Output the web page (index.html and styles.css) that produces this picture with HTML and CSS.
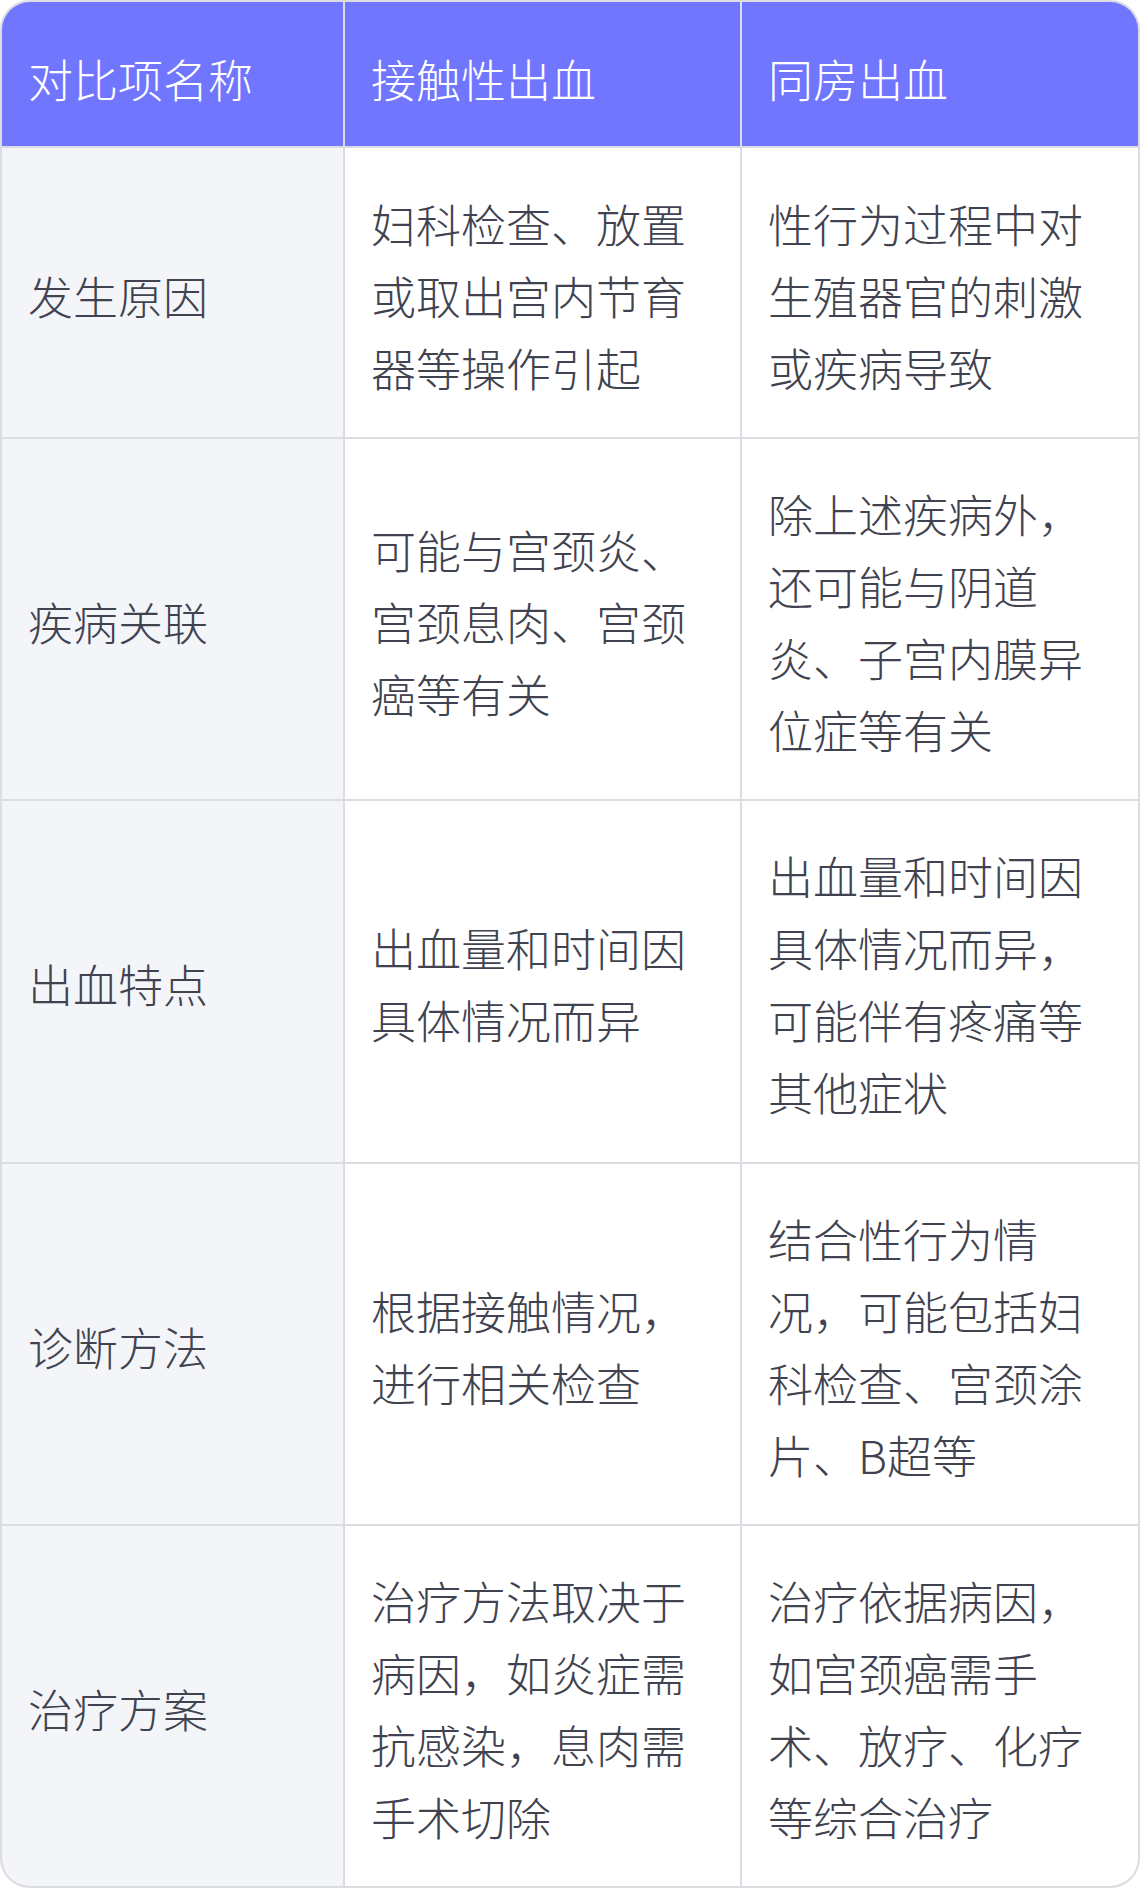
FILE: index.html
```html
<!DOCTYPE html>
<html lang="zh-CN">
<head>
<meta charset="utf-8">
<title>对比表</title>
<link rel="stylesheet" href="styles.css">
</head>
<body>
<div class="table">
  <div class="cell head">对比项名称</div>
  <div class="cell head">接触性出血</div>
  <div class="cell head">同房出血</div>

  <div class="cell label">发生原因</div>
  <div class="cell">妇科检查、放置或取出宫内节育器等操作引起</div>
  <div class="cell">性行为过程中对生殖器官的刺激或疾病导致</div>

  <div class="cell label">疾病关联</div>
  <div class="cell">可能与宫颈炎、宫颈息肉、宫颈癌等有关</div>
  <div class="cell">除上述疾病外，还可能与阴道炎、子宫内膜异位症等有关</div>

  <div class="cell label">出血特点</div>
  <div class="cell">出血量和时间因具体情况而异</div>
  <div class="cell">出血量和时间因具体情况而异，可能伴有疼痛等其他症状</div>

  <div class="cell label">诊断方法</div>
  <div class="cell">根据接触情况，进行相关检查</div>
  <div class="cell">结合性行为情况，可能包括妇科检查、宫颈涂片、B超等</div>

  <div class="cell label">治疗方案</div>
  <div class="cell">治疗方法取决于病因，如炎症需抗感染，息肉需手术切除</div>
  <div class="cell">治疗依据病因，如宫颈癌需手术、放疗、化疗等综合治疗</div>
</div>
</body>
</html>
```

FILE: styles.css
```css
html, body {
  margin: 0;
  padding: 0;
  background: #ffffff;
}

.table {
  width: 1140px;
  height: 1888px;
  box-sizing: border-box;
  border: 2px solid #dcdde3;
  border-radius: 30px;
  overflow: hidden;
  display: grid;
  grid-template-columns: 341px 395px 1fr;
  grid-template-rows: 144px 289px 1fr 1fr 1fr 1fr;
  gap: 2px;
  background: #dcdde3;
  font-family: "Noto Sans CJK SC", "Noto Sans", sans-serif;
  font-weight: 300;
  font-size: 45px;
  line-height: 72px;
  color: #40434f;
}

.cell {
  background: #ffffff;
  padding: 39px 26px 33px;
  display: flex;
  align-items: center;
}

.head {
  background: #7176ff;
  color: #ffffff;
  padding-top: 41px;
  padding-bottom: 31px;
}

.label {
  background: #f4f5f9;
}
```
